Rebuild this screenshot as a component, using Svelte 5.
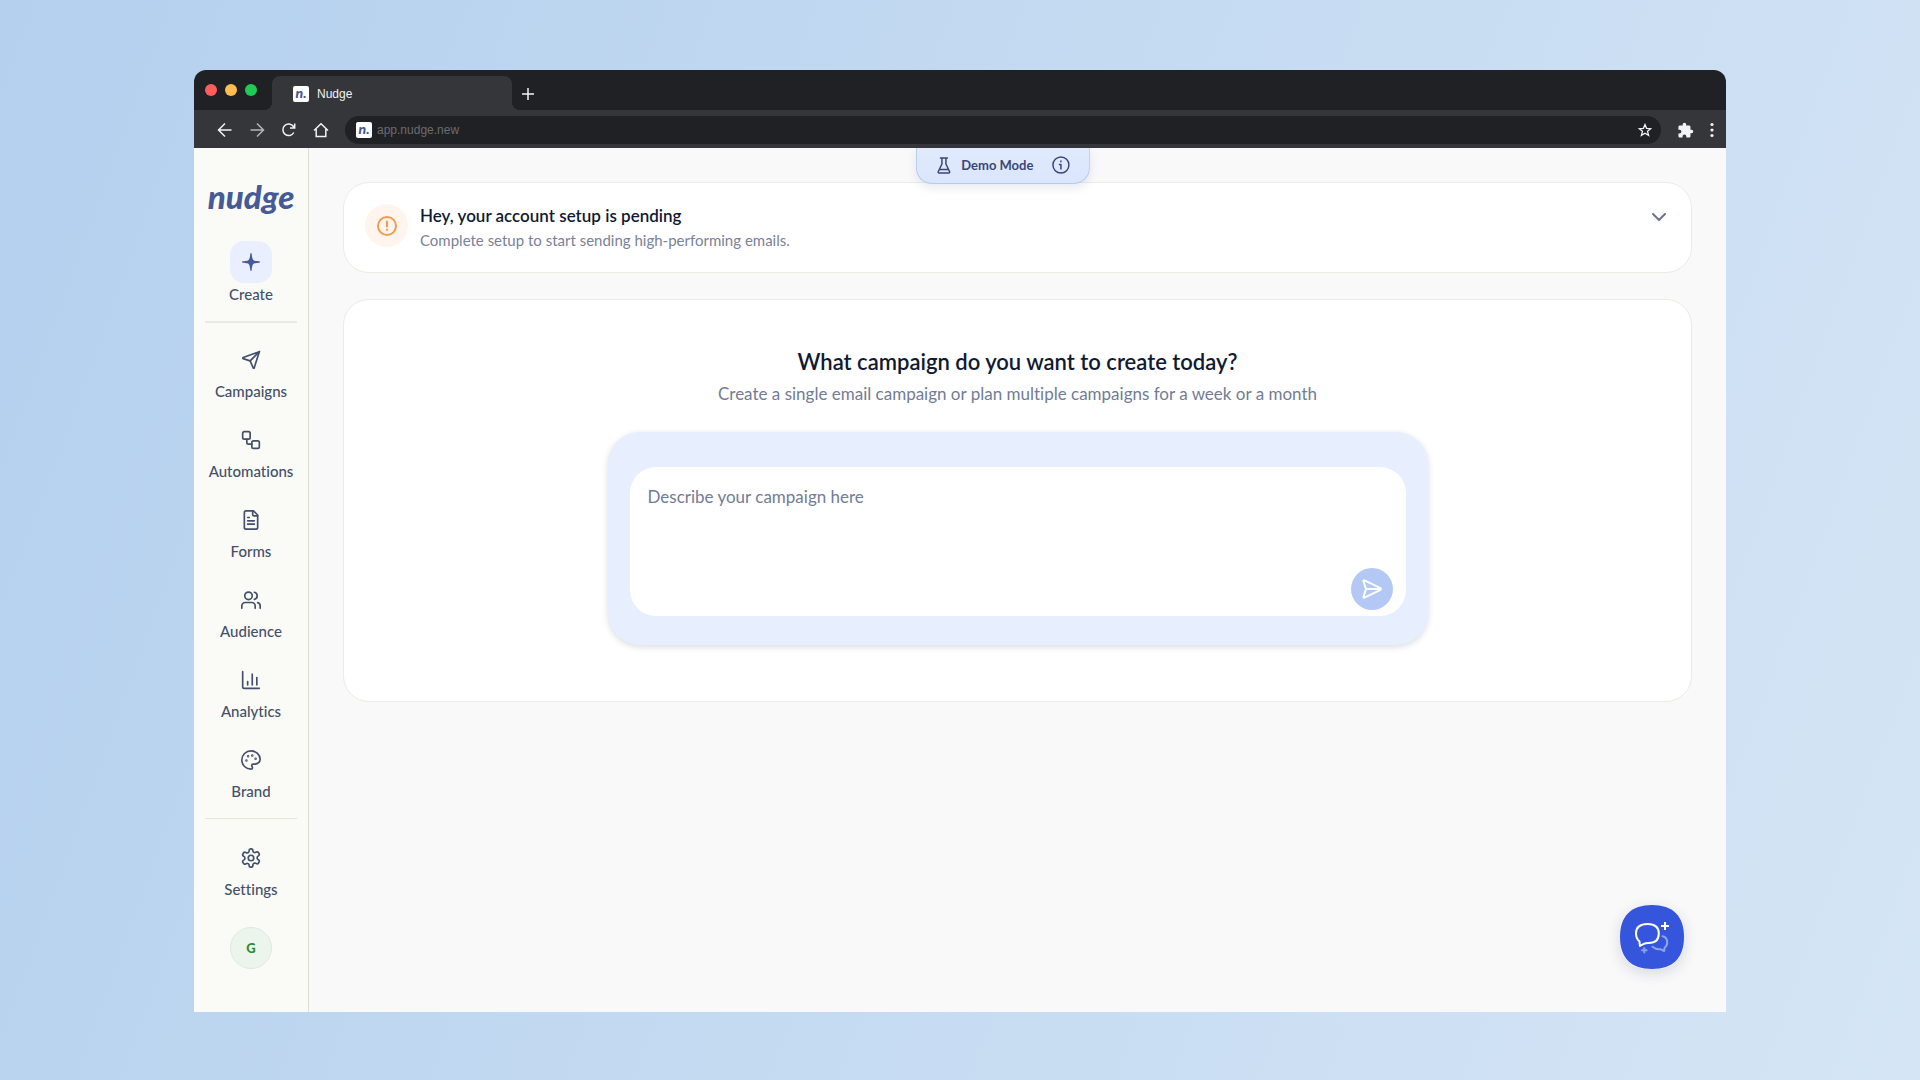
<script>
  let prompt = $state('');
  let active = $state('Create');

  const navItems = ['Campaigns', 'Automations', 'Forms', 'Audience', 'Analytics', 'Brand'];
</script>

{#snippet icon(name)}
  <svg class="icon" viewBox="0 0 24 24" aria-hidden="true">
    {#if name === 'Campaigns'}
      <path d="M22 2 2.6 9.1a.7.7 0 0 0 0 1.3L11 13l3.6 8.4a.7.7 0 0 0 1.3 0L22 2Z" />
      <path d="M22 2 11 13" />
    {:else if name === 'Automations'}
      <rect width="9" height="9" x="2" y="2" rx="2" />
      <path d="M7 11v4a2 2 0 0 0 2 2h4" />
      <rect width="9" height="9" x="13" y="13" rx="2" />
    {:else if name === 'Forms'}
      <path d="M15 1H6a2 2 0 0 0-2 2v18a2 2 0 0 0 2 2h12a2 2 0 0 0 2-2V6Z" />
      <path d="M14 1v4a2 2 0 0 0 2 2h4M10 9H8M16 13H8M16 17H8" />
    {:else if name === 'Audience'}
      <path d="M17 22v-3a4 4 0 0 0-4-4H5a4 4 0 0 0-4 4v3" />
      <circle cx="9" cy="7" r="4.5" />
      <path d="M23 22v-3a4 4 0 0 0-3-3.9M16 2.7a4.4 4.4 0 0 1 0 8.6" />
    {:else if name === 'Analytics'}
      <path d="M2 2v18a2 2 0 0 0 2 2h18M19 18V9M13.5 18V5M8 18v-4" />
    {:else if name === 'Brand'}
      <path d="M12 1a11 11 0 0 0 0 22c1.1 0 1.8-.9 1.8-1.8 0-.5-.2-.9-.5-1.2-.3-.4-.5-.8-.5-1.3a1.8 1.8 0 0 1 1.8-1.8h2.2A6 6 0 0 0 23 11C23 5.5 18 1 12 1Z" />
      <g fill="currentColor"><circle cx="13.5" cy="6.5" r=".5" /><circle cx="17.5" cy="10.5" r=".5" /><circle cx="8.5" cy="7.5" r=".5" /><circle cx="6.5" cy="12.5" r=".5" /></g>
    {:else if name === 'Settings'}
      <path d="M12.22 1h-.44a2 2 0 0 0-2 2v.68a2 2 0 0 1-1 1.73l-.43.25a2 2 0 0 1-2 0l-.65-.38a2 2 0 0 0-2.73.73l-.62 1.08a2 2 0 0 0 .73 2.73l.55.4a2 2 0 0 1 1 1.72v.51a2 2 0 0 1-1 1.74l-.55.39a2 2 0 0 0-.73 2.73l.62 1.08a2 2 0 0 0 2.73.73l.65-.38a2 2 0 0 1 2 0l.43.25a2 2 0 0 1 1 1.73V21a2 2 0 0 0 2 2h.44a2 2 0 0 0 2-2v-.68a2 2 0 0 1 1-1.73l.43-.25a2 2 0 0 1 2 0l.65.38a2 2 0 0 0 2.73-.73l.62-1.09a2 2 0 0 0-.73-2.73l-.55-.38a2 2 0 0 1-1-1.74v-.5a2 2 0 0 1 1-1.74l.55-.39a2 2 0 0 0 .73-2.73l-.62-1.08a2 2 0 0 0-2.73-.73l-.65.38a2 2 0 0 1-2 0l-.43-.25a2 2 0 0 1-1-1.73V3a2 2 0 0 0-2-2z" />
      <circle cx="12" cy="12" r="3.3" />
    {/if}
  </svg>
{/snippet}

<div class="backdrop">
  <div class="window">
    <div class="tab-bar">
      <div class="lights"><i class="red"></i><i class="yellow"></i><i class="green"></i></div>
      <div class="tab">
        <span class="favicon">n.</span>
        <span>Nudge</span>
      </div>
      <button class="chrome-btn new-tab" aria-label="New tab">
        <svg width="12" height="12" viewBox="0 0 12 12"><path d="M6 0v12M0 6h12" /></svg>
      </button>
    </div>

    <div class="toolbar">
      <div class="history">
        <button class="chrome-btn" aria-label="Back"><svg viewBox="0 0 16 16"><path d="M14.5 8H2M8 1.5 1.5 8 8 14.5" /></svg></button>
        <button class="chrome-btn dim" aria-label="Forward"><svg viewBox="0 0 16 16"><path d="M1.5 8H14M8 1.5 14.5 8 8 14.5" /></svg></button>
        <button class="chrome-btn" aria-label="Reload"><svg viewBox="0 0 16 16"><path d="M12.8 10.5A5.8 5.8 0 1 1 12.5 4.5L13.5 6M13.7 1.5V6H9" /></svg></button>
        <button class="chrome-btn" aria-label="Home"><svg viewBox="0 0 16 16"><path d="M1 8.5 8 1.8l7 6.7M3.2 7v7.5h9.6V7" /></svg></button>
      </div>
      <div class="address">
        <span class="favicon">n.</span>
        <input type="text" value="app.nudge.new" aria-label="Address" />
        <button class="chrome-btn" aria-label="Bookmark">
          <svg width="14" height="14" viewBox="0 0 16 16"><path d="m8 1.8 1.8 4.3 4.7.4-3.6 3 1.2 4.6L8 11.6l-4.1 2.5 1.2-4.6-3.6-3 4.7-.4Z" /></svg>
        </button>
      </div>
      <button class="chrome-btn puzzle" aria-label="Extensions">
        <svg viewBox="0 0 24 24"><path d="M20.5 11H19V7a2 2 0 0 0-2-2h-4V3.5a2.5 2.5 0 0 0-5 0V5H4a2 2 0 0 0-2 2v3.8h1.5a2.7 2.7 0 0 1 0 5.4H2V20a2 2 0 0 0 2 2h3.8v-1.5a2.7 2.7 0 0 1 5.4 0V22H17a2 2 0 0 0 2-2v-4h1.5a2.5 2.5 0 0 0 0-5Z" /></svg>
      </button>
      <button class="chrome-btn dots" aria-label="Menu">
        <svg width="4" height="16" viewBox="0 0 4 16"><circle cx="2" cy="2.5" r="1.6" /><circle cx="2" cy="8" r="1.6" /><circle cx="2" cy="13.5" r="1.6" /></svg>
      </button>
    </div>

    <div class="app">
      <aside class="sidebar">
        <a class="logo" href="/">nudge</a>
        <a class="create" href="#create" onclick={() => (active = 'Create')}>
          <span class="create-tile" class:selected={active === 'Create'}>
            <svg width="20" height="20" viewBox="0 0 20 20"><path d="M10 1c.4 0 .6.3.7.9.5 5 1.300 6.300 3 6.800 1.300.3 2.600.4 4.500.6.6.1.8.3.8.7s-.2.6-.8.7c-1.900.2-3.200.3-4.500.6-1.700.5-2.500 1.800-3 6.800-.1.600-.3.9-.7.9s-.6-.3-.7-.9c-.5-5-1.300-6.300-3-6.800-1.300-.3-2.600-.4-4.500-.6C1.200 10.600 1 10.400 1 10s.2-.6.8-.7c1.900-.2 3.200-.3 4.500-.6 1.700-.5 2.500-1.800 3-6.800.1-.6.3-.9.7-.9Z" /></svg>
          </span>
          <span>Create</span>
        </a>
        <hr class="thick" />
        <nav>
          {#each navItems as item}
            <a class="nav-item" href={'#' + item.toLowerCase()} onclick={() => (active = item)}>
              {@render icon(item)}
              <span>{item}</span>
            </a>
          {/each}
        </nav>
        <hr />
        <a class="nav-item" href="#settings" onclick={() => (active = 'Settings')}>
          {@render icon('Settings')}
          <span>Settings</span>
        </a>
        <button class="avatar">G</button>
      </aside>

      <main>
        <div class="demo">
          <svg width="14" height="17" viewBox="0 0 14 17"><path d="M3.5 1h7M5 1v6L1.4 14.5c-.4.8 0 1.5.9 1.5h9.4c.9 0 1.3-.7.9-1.5L9 7V1M2.5 12.5h9" /></svg>
          <span>Demo Mode</span>
          <button aria-label="About demo mode">
            <svg width="18" height="18" viewBox="0 0 18 18"><circle cx="9" cy="9" r="8" /><path d="M7.5 8.5H9V13M9 5v.8" /></svg>
          </button>
        </div>

        <section class="card notice">
          <span class="alert">
            <svg width="20" height="20" viewBox="0 0 20 20"><circle cx="10" cy="10" r="9" /><path d="M10 5.5v5M10 13.5v.5" /></svg>
          </span>
          <div class="notice-text">
            <h2>Hey, your account setup is pending</h2>
            <p>Complete setup to start sending high-performing emails.</p>
          </div>
          <button class="expand" aria-label="Show setup steps">
            <svg width="14" height="8" viewBox="0 0 14 8"><path d="m1 1 6 6 6-6" /></svg>
          </button>
        </section>

        <section class="card campaign">
          <h1>What campaign do you want to create today?</h1>
          <p>Create a single email campaign or plan multiple campaigns for a week or a month</p>
          <form class="composer" onsubmit={(e) => e.preventDefault()}>
            <div class="field">
              <textarea bind:value={prompt} placeholder="Describe your campaign here" aria-label="Campaign description"></textarea>
              <button class="send" aria-label="Send">
                <svg width="20" height="20" viewBox="0 0 20 20"><path d="M1.5 2.2c-.2-.7.4-1.2 1-.9l16 7.9c.6.3.6 1.3 0 1.6l-16 7.9c-.6.3-1.2-.2-1-.9L4 10 1.5 2.2ZM4 10h15" /></svg>
              </button>
            </div>
          </form>
        </section>

        <button class="chat" aria-label="Open chat">
          <svg width="64" height="64" viewBox="0 0 64 64">
            <path class="chat-bg" d="M32 0C53 0 64 11 64 32S53 64 32 64 0 53 0 32 11 0 32 0Z" />
            <path class="faint" d="M42.5 31.2c3 .6 4.7 3 4.7 6.3 0 2.2-1 4-2.6 5.2l-.4 3.3-3.4-1.7c-3.8.3-6.3-.7-8.3-2.5" />
            <path class="faint" d="M24.3 43v4.6M22 45.3h4.6" />
            <path class="bubble" d="M27.5 19c7.5 0 11.3 3 11.3 9.5s-3.8 9.5-10.3 9.5c-2 0-3.500.2-4.700.8L20 41l-.6-4.700c-2.200-1.800-3.400-4.300-3.400-7.800 0-6.500 4-9.500 11.500-9.500Z" />
            <path class="spark" d="M45 17v8M41 21h8" />
          </svg>
        </button>
      </main>
    </div>
  </div>
</div>

<style>
  :global(body) { margin: 0; }
  .backdrop { box-sizing: border-box; min-height: 100vh; padding: 70px 194px 68px; display: flex; background: linear-gradient(110deg, #b4d0ee, #d5e5f5); font-family: Lato, "Liberation Sans", sans-serif; font-variant-ligatures: none; }
  .window { flex: 1; min-width: 0; display: flex; flex-direction: column; border-radius: 12px 12px 0 0; overflow: hidden; }
  button { border: 0; padding: 0; background: none; font: inherit; color: inherit; cursor: pointer; }
  a { color: inherit; text-decoration: none; }
  svg { display: block; fill: none; stroke: currentColor; stroke-linecap: round; stroke-linejoin: round; }
  h1, h2, p { margin: 0; }

  /* browser chrome */
  .tab-bar { height: 40px; display: flex; align-items: flex-end; padding-left: 11px; background: #202124; font: 12px "Liberation Sans", Arial, sans-serif; }
  .lights { display: flex; gap: 8px; width: 67px; height: 26px; }
  .lights i { width: 12px; height: 12px; border-radius: 50%; }
  .red { background: #ff5c5c; }
  .yellow { background: #ffbd4f; }
  .green { background: #20cb55; }
  .tab { position: relative; box-sizing: border-box; width: 240px; height: 34px; padding: 2px 0 0 21px; display: flex; align-items: center; gap: 8px; border-radius: 8px 8px 0 0; background: #35363a; color: #f1f3f4; }
  .tab::before, .tab::after { content: ""; position: absolute; bottom: 0; width: 8px; height: 8px; }
  .tab::before { right: 100%; background: radial-gradient(circle at 0 0, transparent 8px, #35363a 8px); }
  .tab::after { left: 100%; background: radial-gradient(circle at 100% 0, transparent 8px, #35363a 8px); }
  .favicon { width: 16px; height: 16px; border-radius: 2px; background: #fff; color: #46568f; font: italic 900 14px/13px Lato, sans-serif; text-align: center; }
  .chrome-btn { display: grid; place-items: center; color: #f1f3f4; }
  .chrome-btn svg { stroke-width: 1.5; stroke-linecap: butt; stroke-linejoin: miter; }
  .new-tab { width: 32px; height: 32px; }
  .toolbar { box-sizing: border-box; height: 38px; display: flex; align-items: center; padding: 2px 12px 0 23px; background: #35363a; }
  .history { display: flex; gap: 16px; width: 128px; }
  .history svg { width: 16px; height: 16px; }
  .dim { color: #b4b5b8; }
  .address { flex: 1; box-sizing: border-box; height: 28px; padding: 0 9px 0 11px; display: flex; align-items: center; gap: 5px; border-radius: 14px; background: #202124; }
  .address input { flex: 1; min-width: 0; border: 0; padding: 0; outline: 0; background: none; color: #6b6c6f; font: 12px "Liberation Sans", Arial, sans-serif; }
  .puzzle { margin: 0 16px; }
  .puzzle svg { width: 17px; height: 17px; fill: currentColor; stroke: none; }
  .dots svg { fill: currentColor; stroke: none; }

  /* sidebar */
  .app { flex: 1; display: flex; background: #f9f9fa; }
  .sidebar { box-sizing: border-box; width: 115px; flex: none; padding: 22px 11px 42px; display: flex; flex-direction: column; align-items: center; background: #fafbf7; border-right: 1px solid #dcded2; color: #43506a; font-size: 15px; line-height: 20px; font-weight: 500; }
  .logo { height: 71px; color: #465a96; font: italic 900 33px/52px Lato, sans-serif; }
  .create { display: flex; flex-direction: column; align-items: center; gap: 1px; }
  .create-tile { width: 42px; height: 42px; display: grid; place-items: center; border-radius: 14px; color: #465a96; }
  .create-tile svg { fill: currentColor; stroke: none; }
  .selected { background: #e9effe; }
  hr { width: 100%; height: 1px; margin: 17px 0 29px; border: 0; background: #e6e8da; }
  .thick { height: 2px; margin: 17px 0 27px; background: #e9eae6; }
  nav { display: flex; flex-direction: column; gap: 29px; }
  .nav-item { display: flex; flex-direction: column; align-items: center; gap: 11px; }
  .icon { width: 20px; height: 20px; stroke-width: 2; }
  .avatar { width: 42px; height: 42px; margin-top: 28px; border-radius: 50%; border: 1px solid #e0e8e4; background: #ebf5eb; color: #2c8c34; font-size: 13px; font-weight: 900; }

  /* page */
  main { position: relative; flex: 1; min-width: 0; padding: 34px; }
  .demo { position: absolute; top: 0; left: 49%; transform: translateX(-50%); box-sizing: border-box; height: 36px; padding: 0 19px 1px 20px; display: flex; align-items: center; border: 1px solid #b3cbf5; border-top: 0; border-radius: 0 0 16px 16px; background: linear-gradient(#e1eafd, #dae6fd); box-shadow: 0 4px 10px rgba(60, 80, 130, 0.12); color: #3a4678; font-size: 13px; font-weight: 700; white-space: nowrap; }
  .demo svg { stroke-width: 1.5; }
  .demo span { margin: 0 19px 0 10px; }
  .card { box-sizing: border-box; background: #fff; border: 1px solid #ebece4; border-radius: 26px; }
  .notice { padding: 20px 25px 20px 21px; display: flex; align-items: flex-start; }
  .alert { width: 43px; height: 43px; margin-top: 1px; display: grid; place-items: center; border-radius: 50%; background: #fff5ee; color: #f79a4b; }
  .alert svg { stroke-width: 2; }
  .notice-text { flex: 1; padding-left: 12px; }
  h2 { font-size: 17px; line-height: 25px; font-weight: 600; color: #101a33; }
  .notice-text p { font-size: 15px; line-height: 24px; color: #79829a; }
  .expand { padding: 10px 0; color: #6c7590; }
  .expand svg { stroke-width: 2; }
  .campaign { margin-top: 26px; padding: 46px 21px 56px; display: flex; flex-direction: column; align-items: center; }
  h1 { font-size: 22px; line-height: 32px; font-weight: 600; color: #101a33; }
  .campaign p { font-size: 17px; line-height: 31px; color: #727c95; }
  .composer { box-sizing: border-box; width: 100%; max-width: 820px; margin-top: 23px; padding: 35px 22px 29px; border-radius: 32px; background: #e7eefe; box-shadow: 0 2px 6px rgba(30, 40, 80, 0.16); }
  .field { position: relative; height: 149px; border-radius: 26px; background: #fff; }
  textarea { box-sizing: border-box; width: 100%; height: 100%; padding: 18px; border: 0; outline: 0; resize: none; background: none; color: #101a33; font: 17px/24px Lato, "Liberation Sans", sans-serif; }
  textarea::placeholder { color: #727c95; opacity: 1; }
  .send { position: absolute; right: 13px; bottom: 6px; width: 42px; height: 42px; display: grid; place-items: center; border-radius: 50%; background: #b4c8f5; color: #fff; }
  .send svg { stroke-width: 2; }
  .chat { position: absolute; right: 42px; bottom: 43px; border-radius: 26px; box-shadow: 0 4px 14px rgba(30, 40, 80, 0.15); }
  .chat-bg { fill: #3555dc; stroke: none; }
  .bubble { stroke: #fff; stroke-width: 2; }
  .spark { stroke: #fff; stroke-width: 2; stroke-linecap: butt; }
  .faint { stroke: #8ea2f0; stroke-width: 2; }
</style>
